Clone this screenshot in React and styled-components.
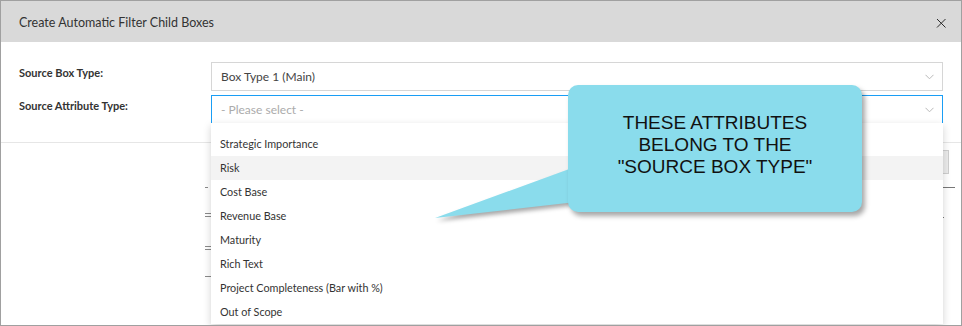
import React from "react"
import styled, {createGlobalStyle} from "styled-components"

const GlobalStyle = createGlobalStyle`
    body {
        margin: 0;
        background: #ffffff;
        font-family: 'Lato', 'Noto Sans', sans-serif;
    }
`

const attributes = [
    "Strategic Importance",
    "Risk",
    "Cost Base",
    "Revenue Base",
    "Maturity",
    "Rich Text",
    "Project Completeness (Bar with %)",
    "Out of Scope",
]

// bits of the page behind the dialog that peek out beside the dropdown
const leftMarks = [
    {top: 6, width: 3},
    {top: 25, width: 7},
    {top: 2, width: 7},
    {top: 29, width: 7},
    {top: 2, width: 7},
    {top: 26, width: 6},
]

export default function App() {
    return (
        <>
            <GlobalStyle />
            <Frame>
                <Header>
                    <Title>Create Automatic Filter Child Boxes</Title>
                    <Close aria-label="close">
                        <svg width="10" height="10" viewBox="0 0 10 10">
                            <path d="M1 1 L9.5 9.5 M9.5 1 L1 9.5" stroke="#2b2b2b" strokeWidth="1" fill="none" />
                        </svg>
                    </Close>
                </Header>
                <Body>
                    <Form>
                        <Label>Source Box Type:</Label>
                        <SelectWrap>
                            <Select>
                                <Value>Box Type 1 (Main)</Value>
                                <Chevron />
                            </Select>
                        </SelectWrap>
                        <Label>Source Attribute Type:</Label>
                        <SelectWrap>
                            <Select $focused>
                                <Value $placeholder>- Please select -</Value>
                                <Chevron />
                            </Select>
                            <Menu>
                                {attributes.map((a, idx) => (
                                    <MenuItem key={a} $active={idx === 1}>{a}</MenuItem>
                                ))}
                            </Menu>
                        </SelectWrap>
                    </Form>
                </Body>
                <Footer>
                    <FooterButton>OK</FooterButton>
                </Footer>
                <Underlay>
                    <MarkColumn>
                        {leftMarks.map((m, idx) => <Mark key={idx} $top={m.top} $width={m.width} />)}
                    </MarkColumn>
                    <MarkColumn>
                        <Mark $top={6} $width={12} $dark />
                        <Mark $top={29} $width={1} $dark />
                    </MarkColumn>
                </Underlay>
                <Callout>
                    <Tail width="150" height="70" viewBox="0 0 150 70">
                        <polygon points="7,58 144,8 148,42" fill="#8adcec" />
                    </Tail>
                    <Bubble>
                        THESE ATTRIBUTES<br />
                        BELONG TO THE<br />
                        "SOURCE BOX TYPE"
                    </Bubble>
                </Callout>
            </Frame>
        </>
    )
}

function Chevron() {
    return (
        <ChevronIcon width="9" height="6" viewBox="0 0 9 6">
            <polyline points="0.5,0.8 4.5,4.8 8.5,0.8" stroke="#b9b9b9" strokeWidth="1" fill="none" />
        </ChevronIcon>
    )
}

const Frame = styled.div`
    position: relative;
    width: 962px;
    height: 326px;
    box-sizing: border-box;
    border: 1px solid #a0a0a0;
    background: #ffffff;
    overflow: hidden;
`

const Header = styled.div`
    height: 41px;
    box-sizing: border-box;
    background: #d9d9d9;
    display: flex;
    align-items: center;
    justify-content: space-between;
    padding: 2px 15px 0 18px;
`

const Title = styled.h1`
    margin: 0;
    font-family: 'Lato', 'Noto Sans', sans-serif;
    font-weight: 400;
    font-size: 12.5px;
    color: #333333;
`

const Close = styled.button`
    border: none;
    background: none;
    padding: 0;
    width: 10px;
    height: 10px;
    display: flex;
    cursor: pointer;
`

const Body = styled.div`
    padding: 20px 18px 18px 18px;
`

const Form = styled.div`
    display: grid;
    grid-template-columns: 192px 1fr;
    row-gap: 4px;
`

const Label = styled.label`
    padding-top: 4px;
    font-size: 11px;
    font-weight: 700;
    color: #333333;
`

const SelectWrap = styled.div`
    position: relative;
`

const Select = styled.div`
    height: 29px;
    box-sizing: border-box;
    border: 1px solid ${p => p.$focused ? "#1a9ef5" : "#d6d6d6"};
    background: #ffffff;
    display: flex;
    align-items: center;
    justify-content: space-between;
    padding: 0 8px 0 9px;
`

const Value = styled.span`
    font-size: 12px;
    color: ${p => p.$placeholder ? "#ababab" : "#444444"};
`

const ChevronIcon = styled.svg`
    display: block;
`

const Menu = styled.ul`
    position: absolute;
    left: 0;
    right: 0;
    top: calc(100% - 1px);
    z-index: 1;
    margin: 0;
    padding: 9px 0 0 0;
    list-style: none;
    background: #ffffff;
    box-shadow: 0 3px 8px rgba(0, 0, 0, 0.18);
`

const MenuItem = styled.li`
    height: 24px;
    line-height: 24px;
    padding-left: 9px;
    font-size: 10.8px;
    color: #333333;
    background: ${p => p.$active ? "#f3f3f3" : "#ffffff"};
`

const Footer = styled.div`
    border-top: 1px solid #e6e6e6;
    display: flex;
    justify-content: flex-end;
    padding: 7px 12px 7px 0;
`

const FooterButton = styled.button`
    width: 60px;
    height: 24px;
    border: 1px solid #cfcfcf;
    background: #ececec;
    font-size: 11px;
    color: #333333;
`

const Underlay = styled.div`
    display: flex;
    justify-content: space-between;
    padding: 0 6px 0 204px;
`

const MarkColumn = styled.div`
    display: flex;
    flex-direction: column;
`

const Mark = styled.span`
    display: block;
    margin-top: ${p => p.$top}px;
    width: ${p => p.$width}px;
    height: 1px;
    background: ${p => p.$dark ? "#777777" : "#8a8a8a"};
`

const Callout = styled.div`
    position: absolute;
    left: 567px;
    top: 84px;
    width: 294px;
    height: 127px;
    z-index: 2;
`

const Tail = styled.svg`
    position: absolute;
    left: -140px;
    top: 75px;
    filter: drop-shadow(2px 3px 2px rgba(0, 0, 0, 0.35));
`

const Bubble = styled.div`
    position: relative;
    height: 100%;
    box-sizing: border-box;
    padding-top: 27px;
    border-radius: 10px;
    background: #8adcec;
    box-shadow: 3px 4px 5px rgba(0, 0, 0, 0.35);
    text-align: center;
    font-family: 'Liberation Sans', Arial, sans-serif;
    font-size: 19px;
    line-height: 22px;
    color: #111111;
`
